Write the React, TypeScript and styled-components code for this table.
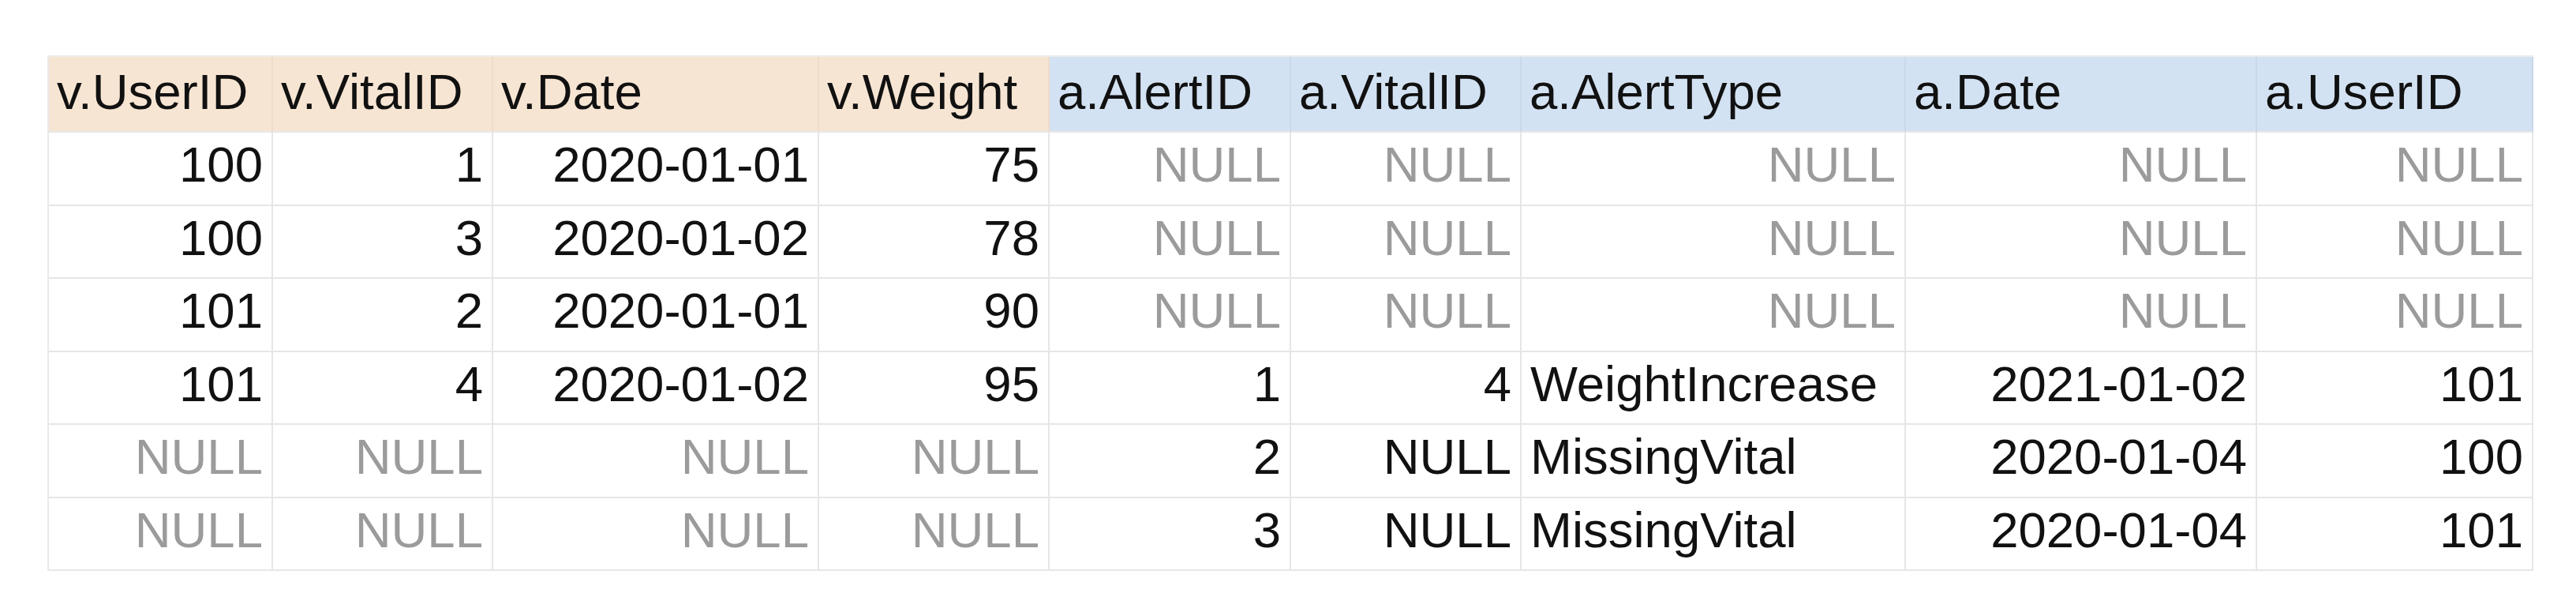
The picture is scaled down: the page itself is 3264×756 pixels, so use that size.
import React from 'react';
import styled, { createGlobalStyle } from 'styled-components';

type Group = 'v' | 'a';
type Align = 'left' | 'right';

const columns: { label: string; group: Group; width: number; align: Align }[] = [
  { label: 'v.UserID', group: 'v', width: 284, align: 'right' },
  { label: 'v.VitalID', group: 'v', width: 279, align: 'right' },
  { label: 'v.Date', group: 'v', width: 413, align: 'right' },
  { label: 'v.Weight', group: 'v', width: 292, align: 'right' },
  { label: 'a.AlertID', group: 'a', width: 306, align: 'right' },
  { label: 'a.VitalID', group: 'a', width: 292, align: 'right' },
  { label: 'a.AlertType', group: 'a', width: 487, align: 'left' },
  { label: 'a.Date', group: 'a', width: 445, align: 'right' },
  { label: 'a.UserID', group: 'a', width: 350, align: 'right' },
];

// null = grey NULL, 'NULL' string = black NULL text
const rows: (string | null)[][] = [
  ['100', '1', '2020-01-01', '75', null, null, null, null, null],
  ['100', '3', '2020-01-02', '78', null, null, null, null, null],
  ['101', '2', '2020-01-01', '90', null, null, null, null, null],
  ['101', '4', '2020-01-02', '95', '1', '4', 'WeightIncrease', '2021-01-02', '101'],
  [null, null, null, null, '2', 'NULL', 'MissingVital', '2020-01-04', '100'],
  [null, null, null, null, '3', 'NULL', 'MissingVital', '2020-01-04', '101'],
];

const App = () => {
  return (
    <>
      <GlobalStyle />
      <Page>
        <Sheet $cols={columns.map((c) => `${c.width}px`).join(' ')}>
          {columns.map((col) => (
            <HeaderCell key={col.label} $group={col.group}>
              {col.label}
            </HeaderCell>
          ))}
          {rows.map((row, r) =>
            row.map((value, c) => {
              const isNull = value === null;
              const align = isNull ? 'right' : columns[c].align;
              return (
                <Cell key={`${r}-${c}`} $align={align} $muted={isNull}>
                  {isNull ? 'NULL' : value}
                </Cell>
              );
            })
          )}
        </Sheet>
      </Page>
    </>
  );
};

export default App;

const GlobalStyle = createGlobalStyle`
  html, body {
    margin: 0;
    padding: 0;
    background: #ffffff;
  }
  body {
    font-family: 'Liberation Sans', Arial, sans-serif;
  }
`;

const Page = styled.div`
  width: 3264px;
  height: 756px;
  padding: 70px 0 0 60px;
  box-sizing: border-box;
  background: #ffffff;
`;

const Sheet = styled.div<{ $cols: string }>`
  display: grid;
  grid-template-columns: ${(p) => p.$cols};
  grid-template-rows: 96px repeat(6, 92.5px);
  width: max-content;
  border-left: 2px solid #e9e9e9;
  border-top: 2px solid #ececec;
`;

const HeaderCell = styled.div<{ $group: Group }>`
  box-sizing: border-box;
  display: flex;
  align-items: flex-end;
  padding: 0 8px 18px 10px;
  background: ${(p) => (p.$group === 'v' ? '#f7e5d3' : '#d3e2f2')};
  border-right: 2px solid ${(p) => (p.$group === 'v' ? '#efdccb' : '#c9d8e8')};
  border-bottom: 2px solid #e8e8e8;
  font-size: 63.5px;
  line-height: 1;
  color: #111111;
  white-space: nowrap;
  overflow: hidden;
`;

const Cell = styled.div<{ $align: Align; $muted: boolean }>`
  box-sizing: border-box;
  display: flex;
  align-items: flex-end;
  justify-content: ${(p) => (p.$align === 'right' ? 'flex-end' : 'flex-start')};
  padding: 0 11px 18px 11px;
  background: #ffffff;
  border-right: 2px solid #e6e6e6;
  border-bottom: 2px solid #e6e6e6;
  font-size: 63.5px;
  line-height: 1;
  color: ${(p) => (p.$muted ? '#9b9b9b' : '#111111')};
  white-space: nowrap;
  overflow: hidden;
`;
